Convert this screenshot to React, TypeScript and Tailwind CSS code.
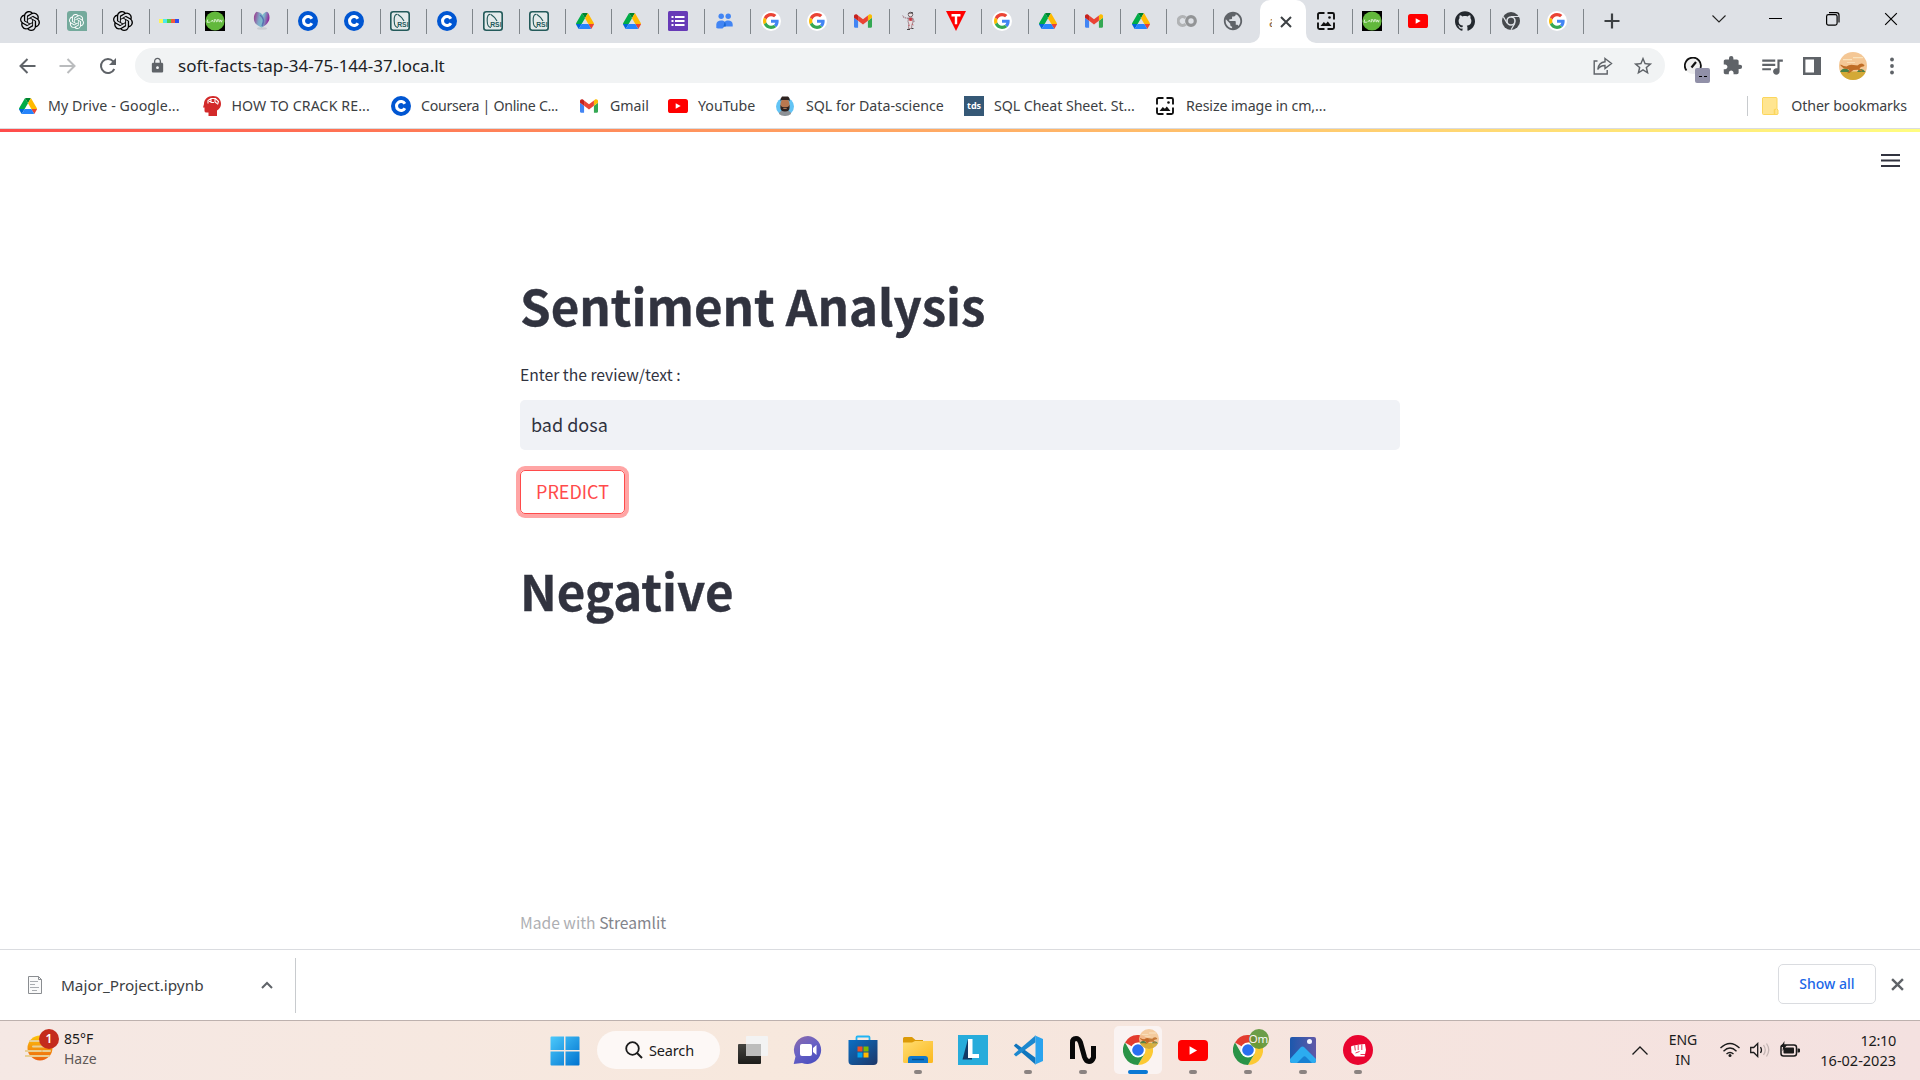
import React from "react";
import { SiOpenai, SiGithub } from "react-icons/si";
import { MdExtension, MdQueueMusic, MdStarBorder, MdLock, MdPublic } from "react-icons/md";

type P = { s?: number };

const Drive = ({ s = 18 }: P) => (
  <svg width={s} height={(s * 78) / 87.3} viewBox="0 0 87.3 78">
    <path fill="#0066da" d="m6.6 66.85 3.85 6.65c.8 1.4 1.95 2.5 3.3 3.3l13.75-23.8h-27.5c0 1.55.4 3.1 1.2 4.5z" />
    <path fill="#00ac47" d="m43.65 25-13.75-23.8c-1.35.8-2.5 1.9-3.3 3.3l-25.4 44a9.06 9.06 0 0 0 -1.2 4.5h27.5z" />
    <path fill="#ea4335" d="m73.55 76.8c1.35-.8 2.5-1.9 3.3-3.3l1.6-2.75 7.65-13.25c.8-1.4 1.2-2.95 1.2-4.5h-27.502l5.852 11.5z" />
    <path fill="#00832d" d="m43.65 25 13.75-23.8c-1.35-.8-2.9-1.2-4.5-1.2h-18.5c-1.6 0-3.15.45-4.5 1.2z" />
    <path fill="#2684fc" d="m59.8 53h-32.3l-13.75 23.8c1.35.8 2.9 1.2 4.5 1.2h50.8c1.6 0 3.15-.45 4.5-1.2z" />
    <path fill="#ffba00" d="m73.4 26.5-12.7-22c-.8-1.4-1.95-2.5-3.3-3.3l-13.75 23.8 16.15 28h27.45c0-1.55-.4-3.1-1.2-4.5z" />
  </svg>
);

const Gmail = () => (
  <svg width="18" height="14" viewBox="52 42 88 66">
    <path fill="#4285f4" d="M58 108h14V74L52 59v43c0 3.32 2.69 6 6 6" />
    <path fill="#34a853" d="M120 108h14c3.32 0 6-2.69 6-6V59l-20 15" />
    <path fill="#fbbc04" d="M120 48v26l20-15v-8c0-7.42-8.47-11.65-14.4-7.2" />
    <path fill="#ea4335" d="M72 74V48l24 18 24-18v26L96 92" />
    <path fill="#c5221f" d="M52 51v8l20 15V48l-5.6-4.2c-5.94-4.45-14.4-.22-14.4 7.2" />
  </svg>
);

const Google = () => (
  <span className="flex size-5 items-center justify-center rounded-full bg-white">
    <svg width="16" height="16" viewBox="0 0 48 48">
      <path fill="#EA4335" d="M24 9.5c3.54 0 6.71 1.22 9.21 3.6l6.85-6.85C35.9 2.38 30.47 0 24 0 14.62 0 6.51 5.38 2.56 13.22l7.98 6.19C12.43 13.72 17.74 9.5 24 9.5z" />
      <path fill="#4285F4" d="M46.98 24.55c0-1.57-.15-3.09-.38-4.55H24v9.02h12.94c-.58 2.96-2.26 5.48-4.78 7.18l7.73 6c4.51-4.18 7.09-10.36 7.09-17.65z" />
      <path fill="#FBBC05" d="M10.53 28.59c-.48-1.45-.76-2.99-.76-4.59s.27-3.14.76-4.59l-7.98-6.19C.92 16.46 0 20.12 0 24c0 3.88.92 7.54 2.56 10.78l7.97-6.19z" />
      <path fill="#34A853" d="M24 48c6.48 0 11.93-2.13 15.89-5.81l-7.73-6c-2.15 1.45-4.92 2.3-8.16 2.3-6.26 0-11.57-4.22-13.47-9.91l-7.98 6.19C6.51 42.62 14.62 48 24 48z" />
    </svg>
  </span>
);

const Coursera = () => (
  <svg width="20" height="20" viewBox="0 0 20 20">
    <circle cx="10" cy="10" r="10" fill="#0056d2" />
    <path d="M13.900 7.700A4.500 4.500 0 1 0 13.900 12.300" fill="none" stroke="#fff" strokeWidth="3" />
  </svg>
);

const Rsi = () => (
  <svg width="20" height="20" viewBox="0 0 20 20">
    <rect x=".8" y=".8" width="18.4" height="18.4" rx="2.5" fill="#e4ebeb" stroke="#235a5a" strokeWidth="1.6" />
    <path d="M7.5 3.5C5.2 3 4 5 4.200 10c.1 3.500.8 6.500 3.800 6.500M8 3.500c3 2 5 4 6 6.500" fill="none" stroke="#235a5a" strokeWidth="1.100" />
    <text x="7.200" y="16.300" fontSize="6.800" fontWeight="700" fill="#235a5a" fontFamily="Liberation Sans, sans-serif">RSI</text>
  </svg>
);

const Youtube = ({ s = 20 }: P) => (
  <svg width={s} height={s * 0.7} viewBox="0 0 20 14">
    <rect width="20" height="14" rx="2.600" fill="#f00" />
    <path d="M7.700 4.200v5.600l5-2.800z" fill="#fff" />
  </svg>
);

const GreenLogo = () => (
  <svg width="20" height="20" viewBox="0 0 20 20">
    <rect width="20" height="20" fill="#000" />
    <circle cx="10" cy="10" r="9.600" fill="#62b83c" />
    <path d="M2.800 8.500L2 11.200h2.800M5.500 11.200L7.500 9l.8 2.200M8.800 8.800h2.400M10 8.800l-.5 2.400M11.500 11.200l.6-2.400h2M11.800 10h2M14.500 11.200l.5-2.400 1.500 2.400.6-2.400" stroke="#e4f5dc" strokeWidth=".9" fill="none" />
  </svg>
);

const Heart = () => (
  <svg width="20" height="20" viewBox="0 0 20 20">
    <defs>
      <linearGradient id="heart" x1="0" x2="1" y1="0" y2=".2">
        <stop offset="0" stopColor="#a02a86" />
        <stop offset=".4" stopColor="#7fa9c8" />
        <stop offset=".65" stopColor="#7cc0cc" />
        <stop offset="1" stopColor="#8e2a9c" />
      </linearGradient>
    </defs>
    <ellipse cx="10" cy="17.500" rx="5" ry="1.200" fill="#c9ccd1" />
    <path d="M4.500.8C1 4 1.200 10 4 13c2 2 4.500 3 5.500 3.500C14 14.500 17.500 11 17.500 6.500 17.500 3.500 16.500 1.500 15 .8 13.500 1 11.500 2 10.500 4 9.500 2.500 7.500 1 4.500.8z" fill="url(#heart)" />
    <path d="M8 4c3 2 4.500 6 2 11" stroke="#5a74b4" strokeWidth="1.500" fill="none" />
  </svg>
);

const ColorBar = () => (
  <span className="flex h-1 w-5">
    <span className="h-1 w-1 bg-[#fcf45c]" />
    <span className="h-1 w-1 bg-[#4ae8ec]" />
    <span className="h-1 w-1 bg-[#4ed04a]" />
    <span className="h-1 w-1 bg-[#f4593c]" />
    <span className="h-1 w-1 bg-[#2f4cf0]" />
  </span>
);

const Forms = () => (
  <svg width="20" height="20" viewBox="0 0 20 20">
    <rect width="20" height="20" rx="1.500" fill="#673ab7" />
    <path d="M3.500 6h2M3.500 10h2M3.500 14h2M7 6h9.500M7 10h9.500M7 14h9.500" stroke="#fff" strokeWidth="2" />
  </svg>
);

const People = () => (
  <svg width="17" height="16" viewBox="0 0 17 16" fill="#4285f4">
    <circle cx="5.200" cy="3.300" r="2.700" />
    <circle cx="12.200" cy="3.300" r="2.700" />
    <path d="M.3 11.500C.3 8.800 2.500 7.500 5.200 7.500c1.600 0 2.700.5 3.500 1.300.8-.8 2-1.300 3.500-1.300 2.600 0 4.500 1.500 4.500 4v2H8.500l-2 2H2L.3 15z" />
    <path d="M8.700 8.800c1 .9 1.300 3 1 4.700H7.500z" fill="#1967d2" />
  </svg>
);

const Figure = () => (
  <svg width="20" height="20" viewBox="0 0 20 20">
    <circle cx="11.500" cy="3.500" r="2.300" fill="#efe3e3" stroke="#77686e" />
    <path d="M8.500 2.500l5-1.500.5 1.500z" fill="#333" />
    <path d="M9.500 7h4l.5 4-1 2.500-.5 4h-3l.5-4-1-3z" fill="#e9dcde" stroke="#8c6f77" strokeWidth=".8" />
    <path d="M9.500 7.500L5 6.500 3.500 4.500M13.800 7.500l1.500 4" stroke="#a58790" fill="none" strokeWidth="1.300" strokeDasharray="1.600 .6" />
    <path d="M10.200 7.200l2.500-.2v2.500h-2zM9 14l1.500.5M13 13l1.500 1" stroke="#c8323c" fill="#c8323c" strokeWidth=".7" />
    <path d="M8 18.500h3M12.500 17.500h2" stroke="#444" />
  </svg>
);

const TLogo = () => (
  <svg width="20" height="20" viewBox="0 0 20 20">
    <path d="M0 0h20L10 20z" fill="#f00" />
    <path d="M5.500 4.200h9M10 4.200v9" stroke="#fff" strokeWidth="2.400" />
  </svg>
);

const Colab = () => (
  <svg width="20" height="20" viewBox="0 0 20 20" fill="none" strokeWidth="3.200">
    <path d="M8.600 6.800A4.400 4.400 0 1 0 8.600 13.200" stroke="#b1b3b5" />
    <circle cx="14" cy="10" r="4.300" stroke="#929496" />
  </svg>
);

const Resize = () => (
  <svg width="18" height="18" viewBox="0 0 18 18">
    <path d="M7.500 1H2.500Q1 1 1 2.500V7.500M10.500 1h5Q17 1 17 2.500V7.500M1 10.500v5Q1 17 2.500 17H7.500M17 10.500v5Q17 17 15.500 17h-5" fill="none" stroke="#111" strokeWidth="1.900" />
    <path d="M3.500 14l3.300-4 2.100 1.800 1.900-2.300L14.500 14z" fill="#111" />
    <circle cx="12.500" cy="5.500" r="1.300" fill="#111" />
  </svg>
);

const ChromeGray = () => (
  <svg width="18" height="18" viewBox="0 0 18 18">
    <circle cx="9" cy="9" r="9" fill="#46494d" />
    <circle cx="9" cy="9" r="4" fill="#46494d" stroke="#dee1e6" strokeWidth="1.600" />
    <path d="M9 4.500h8M5.100 11.200L1.300 4.600M12.900 11.200L9 17.800" stroke="#dee1e6" strokeWidth="1.200" />
  </svg>
);

const ChromeLogo = () => (
  <svg width="30" height="30" viewBox="0 0 48 48">
    <path d="M24 24L3.200 12A24 24 0 0 1 44.800 12z" fill="#e33b2e" />
    <path d="M24 24V12h20.800A24 24 0 0 1 24 48l10.400-18z" fill="#fcc934" />
    <path d="M24 24l10.400 6L24 48A24 24 0 0 1 3.200 12l10.400 18z" fill="#2a9347" />
    <circle cx="24" cy="24" r="12" fill="#fff" />
    <circle cx="24" cy="24" r="9.300" fill="#2a6ff0" />
  </svg>
);

const Cheetah = ({ s = 28 }: P) => (
  <svg width={s} height={s} viewBox="0 0 28 28">
    <defs>
      <clipPath id="avatar"><circle cx="14" cy="14" r="14" /></clipPath>
    </defs>
    <g clipPath="url(#avatar)">
      <rect width="28" height="28" fill="#f4c795" />
      <path d="M4 7h9v1.200H4zM14 5h10v1.200H14zM8 10h8v.8H8z" fill="#f9e3bd" />
      <rect y="19.500" width="28" height="9" fill="#d3a936" />
      <path d="M1 20q1.500-3.500 5-3.500T11 20zM18 20q1.500-3 4-3t4.500 3z" fill="#4b8144" />
      <path d="M1.500 12.500q3.500 2 6 2 3-2.500 7-1.500l4 .5q2-2 4.500-2l2.500 1.500-.5 1.200-3 .8-1.500 1.500 3 2.500-.5.8-4-2-4.500.2-4 3-2.500.2 2.500-2.700-1.500-1.500q-4 .5-7.500-3.500z" fill="#bf6d26" />
    </g>
  </svg>
);

const tabIcons: React.ReactNode[] = [
  <SiOpenai size={20} />,
  <span className="flex size-5 items-center justify-center rounded-[3px] rounded-br-none bg-[#74aa9c] text-white"><SiOpenai size={15} /></span>,
  <SiOpenai size={20} />,
  <ColorBar />, <GreenLogo />, <Heart />, <Coursera />, <Coursera />, <Rsi />, <Coursera />, <Rsi />, <Rsi />,
  <Drive />, <Drive />, <Forms />, <People />, <Google />, <Google />, <Gmail />, <Figure />, <TLogo />, <Google />,
  <Drive />, <Gmail />, <Drive />, <Colab />,
  <MdPublic size={22} color="#5f6368" className="shrink-0" />,
  null,
  <Resize />, <GreenLogo />, <Youtube />, <SiGithub size={20} color="#24292f" />, <ChromeGray />, <Google />,
];

const CloseX = ({ s = 11, c = "#3c4043", w = 2 }: { s?: number; c?: string; w?: number }) => (
  <svg width={s} height={s} viewBox="0 0 12 12"><path d="M1 1l10 10M11 1L1 11" stroke={c} strokeWidth={w} /></svg>
);

function TabStrip() {
  return (
    <div className="flex h-[43px] bg-[#dee1e6] pl-[10.800px]">
      {tabIcons.map((icon, i) =>
        i === 27 ? (
          <div key={i} className="relative flex w-[46.27px] shrink-0 items-center rounded-t-[10px] bg-white pl-[9px]">
            <svg className="absolute bottom-0 -left-2.5" width="10" height="10"><path d="M10 0v10H0A10 10 0 0 0 10 0" fill="#fff" /></svg>
            <svg className="absolute -right-2.5 bottom-0" width="10" height="10"><path d="M0 0v10h10A10 10 0 0 1 0 0" fill="#fff" /></svg>
            <span className="w-[3px] overflow-hidden text-[14px] leading-5 text-[#8b6a4a]">a</span>
            <span className="ml-[8px]"><CloseX s={12} /></span>
          </div>
        ) : (
          <div key={i} className="flex w-[46.27px] shrink-0 items-center justify-between pb-px">
            <span className="ml-[9.500px] flex w-5 justify-center">{icon}</span>
            {i !== 26 && <span className="mt-px h-[25px] w-px bg-[#80868b]" />}
          </div>
        ),
      )}
      <svg className="mt-[13px] ml-[20px]" width="16" height="16"><path d="M8 .5v15M.5 8h15" stroke="#3c4043" strokeWidth="2.200" /></svg>
      <div className="ml-auto flex h-[37px] items-center pr-[22px]">
        <svg className="mr-[43px]" width="14" height="8"><path d="M.5.5L7 7 13.500.5" fill="none" stroke="#222" strokeWidth="1.100" /></svg>
        <span className="mr-[44px] h-px w-[13px] bg-black" />
        <svg className="mr-[44px]" width="14" height="14"><rect x=".6" y="2.600" width="10.500" height="10.500" rx="1.800" fill="none" stroke="#000" strokeWidth="1.200" /><path d="M3 .6h7.500q2.500 0 2.500 2.500v7.500" fill="none" stroke="#000" strokeWidth="1.200" /></svg>
        <CloseX s={14} c="#000" w={1} />
      </div>
    </div>
  );
}

function Toolbar() {
  return (
    <div className="flex h-[45px] items-center bg-white pl-[19px]">
      <svg width="17" height="16"><path d="M16.500 8H1.500M8.500 1L1.500 8l7 7" fill="none" stroke="#5f6368" strokeWidth="2" /></svg>
      <svg className="ml-[23px]" width="17" height="16"><path d="M.5 8h15M8.500 1l7 7-7 7" fill="none" stroke="#babcbe" strokeWidth="2" /></svg>
      <svg className="ml-[23px]" width="18" height="18" viewBox="0 0 18 18"><path d="M15.300 12A7 7 0 1 1 14.200 4.300L16 6" fill="none" stroke="#5f6368" strokeWidth="2" /><path d="M17 1v7h-7z" fill="#5f6368" /></svg>
      <div className="ml-[18px] flex h-[35px] w-[1530px] items-center rounded-full bg-[#f1f3f4] pr-[11px] pl-[14px]">
        <MdLock size={17} color="#5f6368" />
        <span className="ml-[12px] text-[17px] whitespace-nowrap text-[#202124]">soft-facts-tap-34-75-144-37.loca.lt</span>
        <svg className="ml-auto" width="20" height="18" viewBox="0 0 20 18" fill="none" stroke="#5f6368" strokeWidth="1.400"><path d="M4.500 4H1.200v13h13v-4" /><path d="M12 1.500l6.500 5-6.500 5V8.500Q7 8.500 4.800 12.500 5.500 5.500 12 4.800z" /></svg>
        <MdStarBorder className="ml-[19px]" size={22} color="#5f6368" />
      </div>
      <div className="relative ml-[19px] size-[18px]">
        <svg width="18" height="18" viewBox="0 0 18 18"><circle cx="9" cy="9" r="8" fill="#f0f0f0" /><path d="M2.500 13.500A8 8 0 1 1 16.500 11" fill="none" stroke="#111" strokeWidth="1.800" /><path d="M7.500 10.500L12 5" stroke="#111" strokeWidth="2.200" /></svg>
        <span className="absolute top-[11px] left-[11px] flex h-[15px] w-[15px] items-center justify-center gap-[2px] rounded-[2px] bg-[#9190a8] pt-[3px]"><i className="h-px w-[3px] bg-black" /><i className="h-px w-[3px] bg-black" /></span>
      </div>
      <MdExtension className="ml-[20px]" size={21} color="#5f6368" />
      <MdQueueMusic className="ml-[16px]" size={26} color="#5f6368" />
      <svg className="ml-[18px]" width="18" height="18"><path d="M1.200 1.200h15.600v15.600H1.200z" fill="none" stroke="#5f6368" strokeWidth="2.400" /><path d="M11 1h6v16h-6z" fill="#5f6368" /></svg>
      <span className="ml-[18px]"><Cheetah /></span>
      <svg className="ml-[23px]" width="4" height="18" fill="#5f6368"><circle cx="2" cy="2.500" r="1.900" /><circle cx="2" cy="9" r="1.900" /><circle cx="2" cy="15.500" r="1.900" /></svg>
    </div>
  );
}

const Brain = () => (
  <svg width="18" height="20" viewBox="0 0 18 20">
    <path d="M10 0C4.500 0 1 3.500 1 8L0 11.500h1.500V15q0 1.500 2 1.500H5.500V20H14v-5.500c2.500-1.500 4-3.500 4-6.500C18 3.500 15 0 10 0z" fill="#d32a2a" />
    <path d="M5 7.500V4.500l3-2h4.500l3 3-1 3M8 3v3.500h3M12 3v3l2 1.500M6 5.500h2" fill="none" stroke="#fff" strokeWidth="1.100" />
  </svg>
);

const Person = () => (
  <svg width="18" height="20" viewBox="0 0 18 20">
    <circle cx="9" cy="10.500" r="9" fill="#62c4f5" />
    <path d="M3 18q0-3 4-3.500h4q4 .5 4 3.500-2 2-6 2t-6-2z" fill="#8d9297" />
    <rect x="4.500" y="3" width="9" height="12" rx="4.500" fill="#b9784f" />
    <path d="M4.500 8.500v3.500q0 3.500 4.500 3.500t4.500-3.500V8.500q-.5 2-2 2.500h-5q-1.500-.5-2-2.500zM4.500 5.500q0-4 1-4L6 .5h6l1 1q1.200 1 .5 4l-1-1.500h-7z" fill="#2f2320" />
    <path d="M7.300 12.300h3.400" stroke="#c98c64" />
  </svg>
);

const bookmarks: { icon: React.ReactNode; label: string; cls: string }[] = [
  { icon: <Drive />, label: "My Drive - Google...", cls: "w-[183.500px] gap-[11px] tracking-[0.07px]" },
  { icon: <Brain />, label: "HOW TO CRACK RE...", cls: "w-[188.500px] gap-[11px] tracking-[0.08px]" },
  { icon: <Coursera />, label: "Coursera | Online C...", cls: "w-[189px] gap-[10px] tracking-[-0.300px]" },
  { icon: <Gmail />, label: "Gmail", cls: "w-[88px] gap-[12px]" },
  { icon: <Youtube />, label: "YouTube", cls: "w-[108px] gap-[10px]" },
  { icon: <Person />, label: "SQL for Data-science", cls: "w-[188px] gap-[12px]" },
  { icon: <span className="flex size-5 items-center justify-center bg-[#355876] pb-px text-[9px] font-bold text-white">tds</span>, label: "SQL Cheat Sheet. St...", cls: "w-[192px] gap-[10px] tracking-[-0.060px]" },
  { icon: <Resize />, label: "Resize image in cm,...", cls: "w-[200px] gap-[12px] tracking-[-0.100px]" },
];

function BookmarkBar() {
  return (
    <div className="flex h-[41px] items-center border-b border-[#dadce0] bg-white pb-[4px] pl-[19px] text-[14.200px] text-[#3c4043]">
      {bookmarks.map((b) => (
        <div key={b.label} className={`flex shrink-0 items-center whitespace-nowrap ${b.cls}`}>
          {b.icon}
          <span>{b.label}</span>
        </div>
      ))}
      <div className="ml-auto flex items-center pr-[13px]">
        <span className="mr-[14px] h-5 w-px bg-[#c8cbce]" />
        <svg className="mr-[12px]" width="17" height="18"><path d="M1 .5h13q1 0 1 1v10.500l1 1v4l-1 .5H1.500q-1 0-1-1V1z" fill="#ffe591" stroke="#fbd65d" /><path d="M12.500 17.500V13l1.500-1" fill="none" stroke="#fbd65d" strokeWidth="1.500" /></svg>
        <span className="tracking-[-0.120px]">Other bookmarks</span>
      </div>
    </div>
  );
}

const sourceSans = "font-['Noto_Sans_CJK_SC','Noto_Sans_CJK_JP',sans-serif]";

function Page() {
  return (
    <main className={`flex h-[820px] flex-col bg-white text-[#31333f] ${sourceSans}`}>
      <div className="h-[3px] shrink-0 bg-linear-to-r from-[#ff4b4b] to-[#fffd80]" />
      <svg className="mt-[22px] mr-[20px] ml-auto shrink-0" width="19" height="13"><path d="M0 1h19M0 6.500h19M0 12h19" stroke="#31333f" strokeWidth="1.900" /></svg>
      <div className="mx-auto flex h-[782px] w-[880px] flex-col items-start">
        <h1 className="mt-[105px] h-[66px] text-[49.200px] leading-[66px] font-bold whitespace-nowrap [-webkit-text-stroke:0.400px_#31333f]">Sentiment Analysis</h1>
        <label className="mt-[27px] h-[20px] text-[15.700px] leading-[20px]">Enter the review/text :</label>
        <div className="mt-[15px] flex h-[50px] w-full items-center rounded-[5px] bg-[#f0f2f6] px-[11px] pb-[2px] text-[18px]">bad dosa</div>
        <button className="mt-[20px] flex h-[44px] w-[105px] items-center justify-center rounded-[5px] border border-[#ff4b4b] pb-[2px] text-[18px] text-[#ff4b4b] shadow-[0_0_0_4px_rgba(255,75,75,0.5)]">PREDICT</button>
        <h1 className="mt-[43px] h-[66px] text-[49.200px] leading-[66px] font-bold [-webkit-text-stroke:0.400px_#31333f]">Negative</h1>
        <footer className="mt-auto mb-[16px] h-[20px] text-[15.650px] leading-[20px] text-[#adaeb2]">Made with <span className="text-[#83848b]">Streamlit</span></footer>
      </div>
    </main>
  );
}

function DownloadShelf() {
  return (
    <div className="flex h-[71px] items-center border-t border-[#dadce0] bg-white pl-[28px] text-[#3c4043]">
      <svg width="14" height="18"><path d="M.5.5h10l3 3v14H.5z" fill="#fafafa" stroke="#8a8d91" /><path d="M10.500.5v3h3" fill="none" stroke="#8a8d91" /><path d="M2 5.500h8M2 8.500h5M2 11.500h9M4 14.500h5" stroke="#a9acb0" /></svg>
      <span className="ml-[19px] w-[200px] text-[15.300px]">Major_Project.ipynb</span>
      <svg width="12" height="8"><path d="M1 7l5-5 5 5" fill="none" stroke="#5f6368" strokeWidth="2" /></svg>
      <span className="ml-[22px] h-[55px] w-px bg-[#c8cbce]" />
      <div className="ml-auto flex items-center pb-[2px]">
        <div className="flex h-[40px] w-[98px] items-center justify-center rounded-[5px] border border-[#dadce0] pb-px text-[14px] font-medium text-[#1a67e8]">Show all</div>
        <span className="mr-[16px] ml-[15px]"><CloseX s={13} c="#5f6368" w={2.2} /></span>
      </div>
    </div>
  );
}

const Start = () => (
  <svg width="30" height="30" viewBox="0 0 30 30">
    <defs><linearGradient id="win" x1="0" y1="0" x2="1" y2="1"><stop offset="0" stopColor="#4cc9fb" /><stop offset="1" stopColor="#0072cf" /></linearGradient></defs>
    <path d="M.5 1.500q0-1 1-1H14V14H.5zM15.500.5H28.500q1 0 1 1V14h-14zM.5 15.500H14v14H1.500q-1 0-1-1zM15.500 15.500h14v13q0 1-1 1h-13z" fill="url(#win)" />
  </svg>
);
const TaskView = () => (
  <svg width="30" height="30" viewBox="0 0 30 30">
    <defs><linearGradient id="tv" x1="0" y1="0" x2="0" y2="1"><stop offset="0" stopColor="#454440" /><stop offset="1" stopColor="#1c1c1a" /></linearGradient></defs>
    <rect x="0" y="9" width="23" height="20" rx="1" fill="url(#tv)" />
    <rect x="8" y="1" width="22" height="20" rx="1" fill="#f3f3f3" />
    <rect x="8" y="9" width="15" height="12" fill="#bdbdbc" />
  </svg>
);
const Chat = () => (
  <svg width="30" height="30" viewBox="0 0 30 30">
    <defs><linearGradient id="chat" x1="0" y1="0" x2=".6" y2="1"><stop offset="0" stopColor="#8f6aa8" /><stop offset=".5" stopColor="#6a62c4" /><stop offset="1" stopColor="#4d50c0" /></linearGradient></defs>
    <path d="M15 1A14 14 0 1 1 9 28L.7 29l1.800-7.500A14 14 0 0 1 15 1z" fill="url(#chat)" />
    <rect x="7" y="9" width="12" height="12" rx="2" fill="#fff" /><path d="M20 13l3.500-3v10L20 17z" fill="#fff" />
  </svg>
);
const Store = () => (
  <svg width="30" height="30" viewBox="0 0 30 30">
    <defs><linearGradient id="store" x1="0" y1="0" x2="1" y2="1"><stop offset="0" stopColor="#0b6fc4" /><stop offset="1" stopColor="#1d3768" /></linearGradient></defs>
    <path d="M8.500 6V2.500q0-1 1-1h11q1 0 1 1V6" fill="none" stroke="#20b4f4" strokeWidth="1.800" />
    <path d="M.5 5h29v21q0 4-4 4h-21q-4 0-4-4z" fill="url(#store)" />
    <path d="M9.500 11.500h5v5h-5z" fill="#f25022" /><path d="M15.500 11.500h5v5h-5z" fill="#7fba00" /><path d="M9.500 17.500h5v5h-5z" fill="#00a4ef" /><path d="M15.500 17.500h5v5h-5z" fill="#ffb900" />
  </svg>
);
const Explorer = () => (
  <svg width="30" height="30" viewBox="0 0 30 30">
    <defs><linearGradient id="fold" x1="0" y1="0" x2="1" y2="1"><stop offset="0" stopColor="#ffdd72" /><stop offset="1" stopColor="#fcb81c" /></linearGradient></defs>
    <path d="M0 3.500Q0 2 1.500 2H9l3.500 3H20v6H0z" fill="#dc9a08" />
    <path d="M0 7.500h9l3-1.500H30v20.500q0 1.500-1.500 1.500h-27Q0 28 0 26.500z" fill="url(#fold)" />
    <path d="M5 28v-4q0-3 3-3h14q3 0 3 3v4z" fill="#0f78cc" /><path d="M9 24.500h12" stroke="#06508e" strokeWidth="1.400" />
  </svg>
);
const LApp = () => (
  <svg width="30" height="30" viewBox="0 0 30 30">
    <rect width="30" height="30" fill="#27acdb" /><path d="M10 4L4.500 24.500H14V20z" fill="#123a68" /><path d="M10 4h4.500v15H21v4H10z" fill="#fff" />
  </svg>
);
const Code = () => (
  <svg width="30" height="30" viewBox="0 0 30 30">
    <path d="M.8 10.800L3 8.500 22.500 22.800v6.700z" fill="#0f75bd" /><path d="M.8 19.200L3 21.500 22.500 7.200V.5z" fill="#1c88cf" />
    <path d="M21.500.3L30 4v22l-8.500 3.800q1-.5 1-2V2.200q0-1.500-1-1.900z" fill="#2aa3ee" />
  </svg>
);
const NLogo = () => (
  <svg width="26" height="28" viewBox="0 0 26 28">
    <path d="M2.500 23V6.500q0-4 3.500-4 3 0 4.500 4l4 14.500q1.500 4.500 4.500 4.500t4.500-4V10" fill="none" stroke="#080808" strokeWidth="5" />
  </svg>
);
const Photos = () => (
  <svg width="26" height="26" viewBox="0 0 26 26">
    <defs><linearGradient id="ph" x1="0" y1="0" x2="1" y2="0"><stop offset="0" stopColor="#1c58ad" /><stop offset="1" stopColor="#6059a8" /></linearGradient></defs>
    <rect width="26" height="26" rx="2" fill="url(#ph)" /><path d="M0 22L10.500 10.500q2-2 4 0L26 22v2q0 2-2 2H2q-2 0-2-2z" fill="#2cacf0" /><path d="M7 26l6-6q1.500-1.500 3 0l6 6z" fill="#1780d2" /><circle cx="19.500" cy="4.500" r="2.500" fill="#f3f6ff" />
  </svg>
);
const Fist = () => (
  <svg width="30" height="30" viewBox="0 0 30 30">
    <circle cx="15" cy="15" r="15" fill="#e9042f" />
    <path d="M8 11.500q2-1.500 14-2.500l1 6-1.500 6.500H12L8.500 17.500z" fill="#fff" />
    <path d="M11.700 10.500l.6 5M15.200 10v5M18.800 9.500v5.500M12.500 18l4-1.500M17.500 19.500h4.500" stroke="#e9042f" strokeWidth=".8" />
  </svg>
);

const apps: { icon: React.ReactNode; state?: "open" | "active"; badge?: React.ReactNode }[] = [
  { icon: <TaskView /> }, { icon: <Chat /> }, { icon: <Store /> },
  { icon: <Explorer />, state: "open" }, { icon: <LApp /> }, { icon: <Code />, state: "open" }, { icon: <NLogo />, state: "open" },
  { icon: <ChromeLogo />, state: "active", badge: <Cheetah s={20} /> },
  { icon: <Youtube s={30} />, state: "open" },
  { icon: <ChromeLogo />, state: "open", badge: <span className="flex size-5 items-center justify-center rounded-full bg-[#5d9638] text-[11.500px] text-white">Om</span> },
  { icon: <Photos />, state: "open" }, { icon: <Fist />, state: "open" },
];

function Taskbar() {
  return (
    <div className="flex h-[60px] items-start border-t border-[#bdb1ae] bg-linear-to-r from-[#f5e8e4] via-[#f7e8dd] via-40% to-[#f4e1e0] text-[#1b1b1b]">
      <div className="flex w-[540px] items-center pt-[8px] pl-[25px]">
        <div className="relative h-[40px] w-[39px]">
          <svg className="mt-[6px]" width="28" height="27" viewBox="0 0 28 27">
            <defs><linearGradient id="sun" x1="0" y1="0" x2="0" y2="1"><stop offset="0" stopColor="#fdc60b" /><stop offset="1" stopColor="#ec6210" /></linearGradient></defs>
            <circle cx="15" cy="13" r="12.500" fill="url(#sun)" />
            <path d="M5 6h10M8 11.500h14M0 16h16M18 16h7M0 21h24" stroke="#e9cf94" strokeWidth="2" strokeLinecap="round" />
          </svg>
          <span className="absolute top-0 left-[14px] flex size-5 items-center justify-center rounded-full bg-[#c42b1c] text-[12px] font-semibold text-white">1</span>
        </div>
        <div className="text-[14px] leading-[20px]"><div>85°F</div><div className="text-[#5f5957]">Haze</div></div>
      </div>
      <span className="mt-[15px] ml-[9.500px] flex w-[30px]"><Start /></span>
      <div className="mt-[10px] ml-[17.500px] flex h-[38px] w-[123px] items-center rounded-full bg-[#fdf8f6] pl-[28px] text-[14.500px]">
        <svg width="18" height="18"><circle cx="7.500" cy="7.500" r="6.300" fill="none" stroke="#1b1b1b" strokeWidth="1.800" /><path d="M12 12l5 5" stroke="#1b1b1b" strokeWidth="2" /></svg>
        <span className="ml-[6px] pt-[2px] tracking-[-0.150px]">Search</span>
      </div>
      <div className="ml-[5px] flex pt-[5px]">
        {apps.map((a, i) => (
          <div key={i} className="flex w-[55px] justify-center">
            <div className={a.state === "active" ? "relative flex size-12 items-center justify-center rounded-[5px] bg-[#faf3f2]" : "relative flex size-12 items-center justify-center"}>
              {a.icon}
              {a.badge && <span className="absolute top-[3px] left-[25px] opacity-90">{a.badge}</span>}
              {a.state === "open" && <span className="absolute bottom-0 h-1 w-2 rounded-full bg-[#8b8381]" />}
              {a.state === "active" && <span className="absolute bottom-0 h-1 w-5 rounded-full bg-[#0a78d4]" />}
            </div>
          </div>
        ))}
      </div>
      <div className="ml-auto flex h-[58px] items-center pr-[24px] text-[14px] leading-[20px]">
        <svg width="16" height="9"><path d="M.5 8.500L8 1l7.500 7.500" fill="none" stroke="#1b1b1b" strokeWidth="1.300" /></svg>
        <div className="ml-[20px] w-[30px] text-center"><div>ENG</div><div>IN</div></div>
        <svg className="ml-[22px]" width="20" height="16" fill="none" stroke="#1b1b1b" strokeWidth="1.400"><path d="M.5 6Q10-3 19.500 6M3.500 9.200Q10 3 16.500 9.200M6.500 12Q10 9 13.500 12" /><circle cx="10" cy="13.500" r="1.500" fill="#1b1b1b" stroke="none" /></svg>
        <svg className="ml-[10px]" width="20" height="16" fill="none" stroke="#1b1b1b" strokeWidth="1.300"><path d="M.7 5.500h3l4-4v13l-4-4h-3z" /><path d="M10.500 5q2 3 0 6" /><path d="M13.500 3q3.500 5 0 10M16.500 1.500q4.500 6.500 0 13" stroke="#c3b5b3" /></svg>
        <svg className="mb-[2px] ml-[10px]" width="20" height="16"><rect x="1" y="4" width="15.500" height="11" rx="2.500" fill="none" stroke="#1b1b1b" strokeWidth="1.500" /><rect x="3.500" y="6.500" width="10.500" height="6" rx=".8" fill="#1b1b1b" /><path d="M17.500 7.500h1.500q1 0 1 1v2q0 1-1 1h-1.500zM4.500 0L.5 6h2.500l-.5 4 4.500-6H4.200z" fill="#1b1b1b" /></svg>
        <div className="ml-[19px] w-[77px] text-right text-[14.500px] whitespace-nowrap"><div className="tracking-[-0.300px]">12:10</div><div>16-02-2023</div></div>
      </div>
    </div>
  );
}

export default function App() {
  return (
    <div className="flex h-[1080px] w-[1920px] flex-col overflow-hidden font-['Noto_Sans','Open_Sans',sans-serif]">
      <TabStrip />
      <Toolbar />
      <BookmarkBar />
      <Page />
      <DownloadShelf />
      <Taskbar />
    </div>
  );
}
